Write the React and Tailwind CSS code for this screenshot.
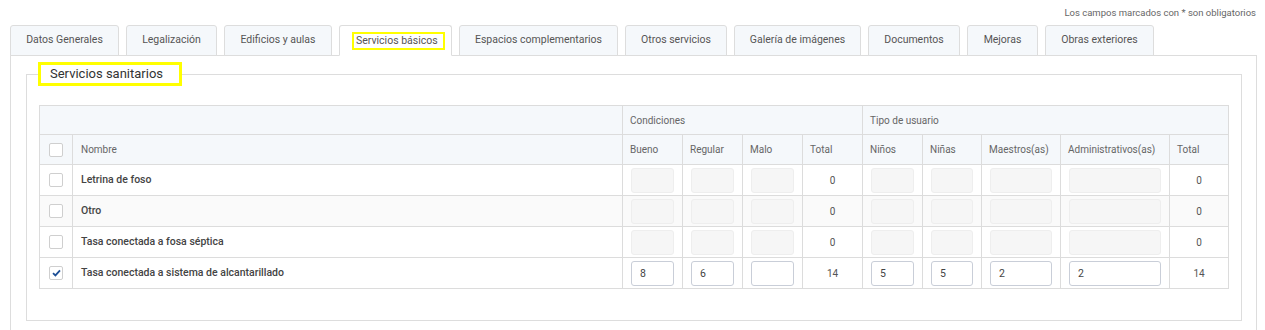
import { useState } from 'react';

const tabs = [
  { label: "Datos Generales", w: "w-[109px]" },
  { label: "Legalización", w: "w-[91px]" },
  { label: "Edificios y aulas", w: "w-[108px]" },
  { label: "Servicios básicos", w: "w-[113px]", active: true },
  { label: "Espacios complementarios", w: "w-[159px]" },
  { label: "Otros servicios", w: "w-[102px]" },
  { label: "Galería de imágenes", w: "w-[127px]" },
  { label: "Documentos", w: "w-[92px]" },
  { label: "Mejoras", w: "w-[71px]" },
  { label: "Obras exteriores", w: "w-[109px]" },
];

const initialRows = [
  { name: "Letrina de foso", checked: false, values: ["", "", "", "", "", ""] },
  { name: "Otro", checked: false, values: ["", "", "", "", "", ""] },
  { name: "Tasa conectada a fosa séptica", checked: false, values: ["", "", "", "", "", ""] },
  { name: "Tasa conectada a sistema de alcantarillado", checked: true, values: ["8", "6", "", "5", "5", "2", "2"] },
];

const Check = ({ checked, onClick }) => (
  <button
    onClick={onClick}
    className="w-[14px] h-[14px] rounded-[2px] border border-[#cfcfcf] bg-white flex items-center justify-center mx-auto"
  >
    {checked && (
      <svg width="9" height="8" viewBox="0 0 9 8">
        <path d="M1 4.2 L3.4 6.4 L8 1.4" fill="none" stroke="#1d4f96" strokeWidth="1.8" />
      </svg>
    )}
  </button>
);

const Cell = ({ value, enabled }) => (
  <td className="border border-[#dcdcdc] px-[8px]">
    <input
      readOnly
      disabled={!enabled}
      value={value}
      className={`block w-full h-[25px] rounded-[3px] text-[10.5px] px-[8px] outline-none ${
        enabled ? 'bg-white border border-[#c9ced8] text-[#444]' : 'bg-[#f6f6f6] border border-[#eeeeee]'
      }`}
    />
  </td>
);

const sum = (arr) => arr.reduce((a, b) => a + (parseInt(b) || 0), 0);

export default function App() {
  const [rows, setRows] = useState(initialRows);

  const toggle = (i) => setRows(rows.map((r, j) => (j === i ? { ...r, checked: !r.checked } : r)));

  const th = "border border-[#dcdcdc] text-left font-normal text-[10px] text-[#666] px-[7px]";

  return (
    <div className="w-[1265px] h-[330px] overflow-hidden bg-white font-['Roboto',sans-serif] pl-[10px] pr-[8px]">
      <div className="h-[25px] flex items-center justify-end text-[9.5px] text-[#666] pr-[1px] pt-[1px]">
        Los campos marcados con * son obligatorios
      </div>

      {/* Tabs */}
      <div className="flex gap-[7px] relative z-10">
        {tabs.map((t) => (
          <div
            key={t.label}
            className={`${t.w} h-[31px] rounded-t-[3px] border border-[#dddddd] flex items-center text-[10.5px] text-[#555] whitespace-nowrap pb-[1px] ${
              t.active ? 'bg-white border-b-white justify-start pl-[12px]' : 'bg-[#f5f8fb] h-[30px] justify-center'
            }`}
          >
            {t.active ? (
              <span className="border-2 border-[#ffff00] pl-[2px] h-[18px] w-[93px] flex items-center mt-[1px]">{t.label}</span>
            ) : (
              t.label
            )}
          </div>
        ))}
      </div>

      {/* Panel */}
      <div className="border border-[#dddddd] mt-[-1px] px-[15px] pt-[6px] h-[300px]">
        <fieldset className="border border-[#dddddd] px-[12px] pb-[31px]">
          <legend className="ml-[-1px] border-[3px] border-[#ffff00] h-[24px] w-[144px] pl-[9px] flex items-center text-[13px] text-[#333]">
            Servicios sanitarios
          </legend>
          <table className="mt-[19px] w-[1189px] border-collapse table-fixed">
            <colgroup>
              <col className="w-[33px]" />
              <col className="w-[550px]" />
              <col className="w-[60px]" />
              <col className="w-[60px]" />
              <col className="w-[60px]" />
              <col className="w-[60px]" />
              <col className="w-[60px]" />
              <col className="w-[59px]" />
              <col className="w-[79px]" />
              <col className="w-[109px]" />
              <col className="w-[59px]" />
            </colgroup>
            <thead className="bg-[#f5f8fb]">
              <tr className="h-[29px]">
                <th className="border border-[#dcdcdc]" colSpan={2}></th>
                <th className={th} colSpan={4}>Condiciones</th>
                <th className={th} colSpan={5}>Tipo de usuario</th>
              </tr>
              <tr className="h-[30px]">
                <th className="border border-[#dcdcdc]"><Check checked={false} /></th>
                <th className={th + " px-[8px]"}>Nombre</th>
                <th className={th}>Bueno</th>
                <th className={th}>Regular</th>
                <th className={th}>Malo</th>
                <th className={th}>Total</th>
                <th className={th}>Niños</th>
                <th className={th}>Niñas</th>
                <th className={th}>Maestros(as)</th>
                <th className={th}>Administrativos(as)</th>
                <th className={th}>Total</th>
              </tr>
            </thead>
            <tbody>
              {rows.map((r, i) => {
                const v = r.values;
                const cond = r.checked ? sum(v.slice(0, 3)) : 0;
                const users = r.checked ? sum(v.slice(3, 7)) : 0;
                return (
                  <tr key={r.name} className={`h-[31px] ${i === 1 ? 'bg-[#fafafa]' : 'bg-white'}`}>
                    <td className="border border-[#dcdcdc]"><Check checked={r.checked} onClick={() => toggle(i)} /></td>
                    <td className="border border-[#dcdcdc] px-[8px] text-[10.5px] font-medium text-[#444]">{r.name}</td>
                    <Cell value={v[0]} enabled={r.checked} />
                    <Cell value={v[1]} enabled={r.checked} />
                    <Cell value={v[2]} enabled={r.checked} />
                    <td className="border border-[#dcdcdc] text-center text-[10px] text-[#555]">{cond}</td>
                    <Cell value={v[3]} enabled={r.checked} />
                    <Cell value={v[4]} enabled={r.checked} />
                    <Cell value={v[5]} enabled={r.checked} />
                    <Cell value={v[6]} enabled={r.checked} />
                    <td className="border border-[#dcdcdc] text-center text-[10px] text-[#555]">{users}</td>
                  </tr>
                );
              })}
            </tbody>
          </table>
        </fieldset>
      </div>
    </div>
  );
}
